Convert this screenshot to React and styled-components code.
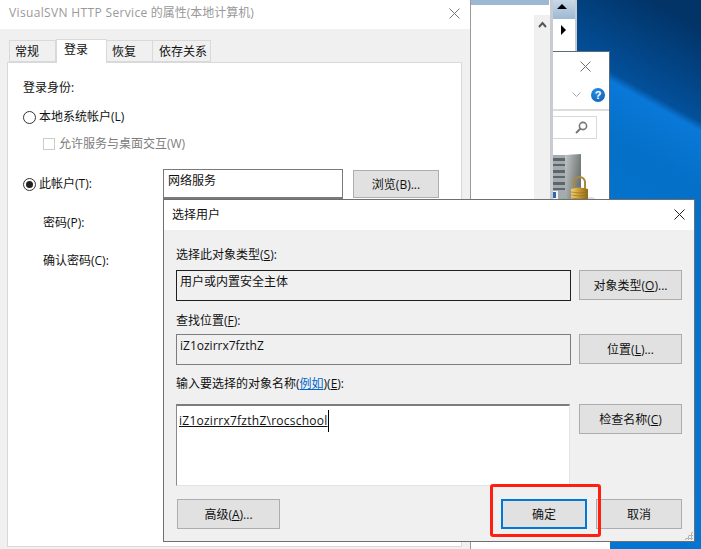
import React from "react";
import styled, { createGlobalStyle } from "styled-components";

const GlobalStyle = createGlobalStyle`
  html, body {
    margin: 0;
    padding: 0;
    background: #0078d7;
  }
  * {
    box-sizing: border-box;
  }
`;

const Desktop = styled.div`
  position: relative;
  width: 701px;
  height: 549px;
  overflow: hidden;
  font-family: "Open Sans", "Noto Sans CJK SC", sans-serif;
  font-size: 12px;
  line-height: 16px;
  color: #111;
  background: linear-gradient(
    209deg,
    #023468 3%,
    #03509a 13%,
    #0a78d8 14%,
    #0470c8 20%,
    #0474d0 40%,
    #0078d7 100%
  );
`;

const Window = styled.div`
  position: absolute;
  left: ${(p) => p.$left}px;
  top: ${(p) => p.$top}px;
  width: ${(p) => p.$width}px;
  height: ${(p) => p.$height}px;
  background: ${(p) => p.$bg || "#f0f0f0"};
  border: 1px solid ${(p) => p.$border || "#7a7a7a"};
`;

const BehindList = styled(Window)`
  border-width: 0 3px 0 1px;
  border-color: #c8ccd0;
  display: flex;
  flex-direction: column;
`;

const ListTop = styled.div`
  height: 5px;
  margin-right: 1px;
  background: #9db8d4;
`;

const ListScroll = styled.div`
  align-self: flex-end;
  width: 16px;
  flex: 1;
  margin-top: 10px;
  background: #f0f0f0;
  display: flex;
  justify-content: center;
  padding-top: 6px;
`;

const SideStrip = styled(Window)`
  border-width: 0 2px 0 0;
  border-color: #c8ccd0;
  display: flex;
  flex-direction: column;
`;

const StripUp = styled.div`
  width: 100%;
  height: 19px;
  background: linear-gradient(#c9d8e8, #9db8d4);
  display: flex;
  align-items: center;
  justify-content: center;
  padding: 0 5px 7px 0;
`;

const StripRight = styled.div`
  margin: 6px 0 0 8px;
  width: 0;
  height: 0;
  border-left: 5px solid #000;
  border-top: 5px solid transparent;
  border-bottom: 5px solid transparent;
`;

const Mmc = styled(Window)`
  border-width: 1px 1px 0 0;
  border-color: #5a6b7a;
  display: flex;
  flex-direction: column;
`;

const MmcClose = styled.div`
  height: 29px;
  display: flex;
  justify-content: flex-end;
  align-items: center;
  padding: 0 18px 0 0;
`;

const MmcHelpRow = styled.div`
  height: 27px;
  padding: 0 4px 1px 0;
  display: flex;
  justify-content: flex-end;
  align-items: center;
  gap: 10px;
  border-bottom: 2px solid #dcdcdc;
  box-sizing: content-box;
  padding-top: 0;
`;

const HelpIcon = styled.div`
  width: 14px;
  height: 14px;
  border-radius: 50%;
  background: radial-gradient(circle at 40% 30%, #2a8de4, #0a5cb0);
  color: #fff;
  font: bold 11px/14px "Liberation Sans", sans-serif;
  text-align: center;
`;

const MmcSearch = styled.div`
  height: 23px;
  width: 44px;
  margin-top: 5px;
  border: 1px solid #d9d9d9;
  border-left: 0;
  display: flex;
  justify-content: flex-end;
  align-items: center;
  padding-right: 8px;
`;

const ServerArt = styled.div`
  margin-top: 15px;
  height: 49px;
`;

const Frame = styled(Window)`
  display: flex;
  flex-direction: column;
`;

const TitleBar = styled.div`
  height: ${(p) => p.$height}px;
  flex: none;
  background: #fff;
  color: ${(p) => p.$color || "#111"};
  display: flex;
  align-items: center;
  justify-content: space-between;
  padding: ${(p) => p.$pad};
`;

const TitleLatin = styled.span`
  letter-spacing: 0.35px;
`;

const Tabs = styled.div`
  display: flex;
  align-items: flex-end;
  height: 33px;
  padding-left: 9px;
`;

const Tab = styled.div`
  height: ${(p) => (p.$active ? 24 : 22)}px;
  width: ${(p) => p.$width}px;
  background: ${(p) => (p.$active ? "#fff" : "#f0f0f0")};
  border: 1px solid #d9d9d9;
  border-bottom: ${(p) => (p.$active ? "0" : "1px solid #d9d9d9")};
  border-left: ${(p) => (p.$first || p.$active ? "1px solid #d9d9d9" : "0")};
  margin-bottom: ${(p) => (p.$active ? "-1px" : "0")};
  position: relative;
  z-index: ${(p) => (p.$active ? 1 : 0)};
  padding: ${(p) => (p.$active ? "2px" : "3px")} 0 0 ${(p) => p.$pad}px;
  white-space: nowrap;
`;

const Pane = styled.div`
  width: 455px;
  height: 485px;
  margin-left: 7px;
  background: #fff;
  border: 1px solid #d9d9d9;
  padding: 17px 0 0 15px;
`;

const Heading = styled.div`
  height: 16px;
`;

const OptionRow = styled.div`
  display: flex;
  align-items: center;
  height: ${(p) => p.$height || 16}px;
  margin-top: ${(p) => p.$top || 0}px;
  margin-left: ${(p) => p.$left || 0}px;
  color: ${(p) => (p.$disabled ? "#7d7d7d" : "#111")};
`;

const Radio = styled.span`
  width: 13px;
  height: 13px;
  margin-right: 3px;
  border: 1px solid #333;
  border-radius: 50%;
  background: #fff;
  display: flex;
  align-items: center;
  justify-content: center;
  &::after {
    content: "";
    display: ${(p) => (p.$on ? "block" : "none")};
    width: 7px;
    height: 7px;
    border-radius: 50%;
    background: #222;
  }
`;

const Check = styled.span`
  width: 12px;
  height: 12px;
  margin-right: 4px;
  border: 1px solid #ccc;
  background: #fff;
`;

const AccountLabel = styled.span`
  width: 124px;
`;

const AccountInput = styled.div`
  width: 180px;
  height: 30px;
  padding: 3px 4px;
  border: 1px solid #7a7a7a;
  border-bottom-width: 2px;
  background: #fff;
`;

const Button = styled.div`
  width: ${(p) => p.$width || 103}px;
  height: ${(p) => p.$height || 30}px;
  background: #e1e1e1;
  border: ${(p) => (p.$default ? "2px solid #0078d7" : "1px solid #adadad")};
  display: flex;
  align-items: center;
  justify-content: center;
  flex: none;
  padding-top: 1px;
  white-space: nowrap;
`;

const BrowseButton = styled(Button)`
  margin-left: 10px;
`;

const Indented = styled.div`
  margin: ${(p) => p.$top}px 0 0 20px;
`;

const Body = styled.div`
  flex: 1;
  padding: 0 11px 0 12px;
  position: relative;
`;

const FieldLabel = styled.div`
  height: 16px;
  margin-top: ${(p) => p.$top}px;
`;

const FieldRow = styled.div`
  display: flex;
  gap: 8px;
  margin-top: ${(p) => p.$top}px;
`;

const ReadBox = styled.div`
  width: 395px;
  height: 31px;
  padding: 3px 3px;
  border: 1px solid ${(p) => p.$border};
  background: #f0f0f0;
`;

const NameInput = styled.div`
  width: 394px;
  height: 82px;
  margin-right: 1px;
  padding: 7px 2px;
  background: #fff;
  border-style: solid;
  border-color: #7d7d7d #e3e3e3 #e3e3e3 #8a8a8a;
  border-width: 2px 1px 1px 1px;
`;

const Typed = styled.span`
  text-decoration: underline;
  letter-spacing: 0.25px;
  border-right: 1px solid #000;
  padding: 2px 0 3px;
`;

const Mnemonic = styled.span`
  text-decoration: underline;
`;

const HelpLink = styled.span`
  color: #0066cc;
  text-decoration: underline;
`;

const Footer = styled.div`
  display: flex;
  margin-top: 13px;
  padding-left: 1px;
`;

const OkButton = styled(Button)`
  margin-left: 221px;
`;

const CancelButton = styled(Button)`
  margin-left: 9px;
`;

const Highlight = styled.div`
  position: absolute;
  left: 490px;
  top: 484px;
  width: 111px;
  height: 53px;
  border: 3px solid #ff1e12;
  border-radius: 3px;
`;

const Grip = styled.div`
  position: absolute;
  right: 1px;
  bottom: 1px;
  width: 9px;
  height: 9px;
  background-image: radial-gradient(#b5b5b5 1px, transparent 1.2px);
  background-size: 3px 3px;
  clip-path: polygon(100% 0, 100% 100%, 0 100%);
`;

const Close = ({ size = 11, color = "#6f6f6f" }) => (
  <svg width={size} height={size} viewBox="0 0 11 11">
    <path d="M0.5 0.5 L10.5 10.5 M10.5 0.5 L0.5 10.5" stroke={color} strokeWidth="1" fill="none" />
  </svg>
);

const ServerLock = () => (
  <svg width="42" height="49" viewBox="0 0 42 49">
    <defs>
      <linearGradient id="side" x1="0" x2="1" y1="0" y2="0.4">
        <stop offset="0" stopColor="#c2c6c6" />
        <stop offset="1" stopColor="#6d7373" />
      </linearGradient>
      <linearGradient id="lock" x1="0" x2="1" y1="0" y2="0">
        <stop offset="0" stopColor="#f0d27a" />
        <stop offset="0.5" stopColor="#c9982e" />
        <stop offset="1" stopColor="#8d6a1c" />
      </linearGradient>
    </defs>
    <path d="M0 1 H13 V48 H0 Z" fill="#a4abae" />
    <path d="M0 4 H12 V7 H0 Z M0 10 H12 V12 H0 Z M0 16 H12 V19 H0 Z M0 22 H12 V24 H0 Z M0 28 H12 V31 H0 Z M0 34 H12 V36 H0 Z" fill="#5d666a" />
    <path d="M12 1 L28 0 V40 L14 48 H12 Z" fill="url(#side)" />
    <path d="M0 37 H5 V46 H0 Z" fill="#f4f4f4" />
    <path d="M0 38 H3 V44 H0 Z" fill="#2f68b0" />
    <rect x="10" y="44" width="2" height="2" fill="#5bd03a" />
    <ellipse cx="37" cy="45" rx="5" ry="2" fill="#c8c8c8" opacity="0.6" />
    <path d="M21 35 V28 a5.5 5 0 0 1 11 0 V35" fill="none" stroke="#a98a3a" strokeWidth="2" />
    <path d="M18 35 q8.5 -3 17 0 V46 q-8.5 3 -17 0 Z" fill="url(#lock)" />
    <path d="M18 38 q8.5 2 17 0 M18 41 q8.5 2 17 0 M18 44 q8.5 2 17 0" stroke="#8d6a1c" strokeWidth="0.6" fill="none" />
  </svg>
);

export default function App() {
  return (
    <Desktop>
      <GlobalStyle />

      <BehindList $left={470} $top={0} $width={83} $height={220} $bg="#fff">
        <ListTop />
        <ListScroll>
          <svg width="9" height="7" viewBox="0 0 9 7">
            <path d="M1 6 L4.5 2 L8 6" stroke="#555" strokeWidth="2" fill="none" />
          </svg>
        </ListScroll>
      </BehindList>

      <SideStrip $left={553} $top={0} $width={24} $height={60} $bg="#fff">
        <StripUp>
          <svg width="10" height="5" viewBox="0 0 10 5">
            <path d="M5 0 L10 5 H0 Z" fill="#000" />
          </svg>
        </StripUp>
        <StripRight />
      </SideStrip>

      <Mmc $left={553} $top={51} $width={57} $height={160} $bg="#fff">
        <MmcClose>
          <Close />
        </MmcClose>
        <MmcHelpRow>
          <svg width="9" height="6" viewBox="0 0 9 6">
            <path d="M0.5 0.5 L4.5 4.5 L8.5 0.5" stroke="#a8a8a8" strokeWidth="1" fill="none" />
          </svg>
          <HelpIcon>?</HelpIcon>
        </MmcHelpRow>
        <MmcSearch>
          <svg width="13" height="13" viewBox="0 0 13 13">
            <circle cx="8" cy="5" r="3.6" fill="none" stroke="#777" strokeWidth="1.6" />
            <path d="M5.5 7.5 L1 12" stroke="#777" strokeWidth="2" />
          </svg>
        </MmcSearch>
        <ServerArt>
          <ServerLock />
        </ServerArt>
      </Mmc>

      <Window $left={470} $top={205} $width={140} $height={344} $bg="#fff" $border="#fff" />

      <Frame $left={-1} $top={-1} $width={472} $height={552} $border="#9a9a9a">
        <TitleBar $height={29} $color="#999" $pad="0 10px 3px 9px">
          <span>
            <TitleLatin>VisualSVN HTTP Service</TitleLatin> 的属性(本地计算机)
          </span>
          <Close size={11} color="#777" />
        </TitleBar>
        <Tabs>
          <Tab $first $width={47} $pad={5}>常规</Tab>
          <Tab $active $width={51} $pad={7}>登录</Tab>
          <Tab $width={46} $pad={5}>恢复</Tab>
          <Tab $width={58} $pad={6}>依存关系</Tab>
        </Tabs>
        <Pane>
          <Heading>登录身份:</Heading>
          <OptionRow $top={13}>
            <Radio />
            本地系统帐户(L)
          </OptionRow>
          <OptionRow $top={11} $left={20} $disabled>
            <Check />
            允许服务与桌面交互(W)
          </OptionRow>
          <OptionRow $top={17} $height={30}>
            <Radio $on />
            <AccountLabel>此帐户(T):</AccountLabel>
            <AccountInput>网络服务</AccountInput>
            <BrowseButton $width={86} $height={28}>浏览(B)...</BrowseButton>
          </OptionRow>
          <Indented $top={16}>密码(P):</Indented>
          <Indented $top={22}>确认密码(C):</Indented>
        </Pane>
      </Frame>

      <Frame $left={163} $top={199} $width={532} $height={343} $border="#6f6f6f">
        <TitleBar $height={30} $pad="0 9px 1px 8px">
          选择用户
          <Close size={11} color="#222" />
        </TitleBar>
        <Body>
          <FieldLabel $top={17}>选择此对象类型(<Mnemonic>S</Mnemonic>):</FieldLabel>
          <FieldRow $top={7}>
            <ReadBox $border="#1f1f1f">用户或内置安全主体</ReadBox>
            <Button>对象类型(<Mnemonic>O</Mnemonic>)...</Button>
          </FieldRow>
          <FieldLabel $top={12}>查找位置(<Mnemonic>F</Mnemonic>):</FieldLabel>
          <FieldRow $top={5}>
            <ReadBox $border="#7d7d7d">iZ1ozirrx7fzthZ</ReadBox>
            <Button>位置(<Mnemonic>L</Mnemonic>)...</Button>
          </FieldRow>
          <FieldLabel $top={11}>
            输入要选择的对象名称(<HelpLink>例如</HelpLink>)(<Mnemonic>E</Mnemonic>):
          </FieldLabel>
          <FieldRow $top={12}>
            <NameInput>
              <Typed>iZ1ozirrx7fzthZ\rocschool</Typed>
            </NameInput>
            <Button>检查名称(<Mnemonic>C</Mnemonic>)</Button>
          </FieldRow>
          <Footer>
            <Button $height={30}>高级(<Mnemonic>A</Mnemonic>)...</Button>
            <OkButton $default $width={86} $height={30}>确定</OkButton>
            <CancelButton $width={86} $height={30}>取消</CancelButton>
          </Footer>
          <Grip />
        </Body>
      </Frame>

      <Highlight />
    </Desktop>
  );
}
